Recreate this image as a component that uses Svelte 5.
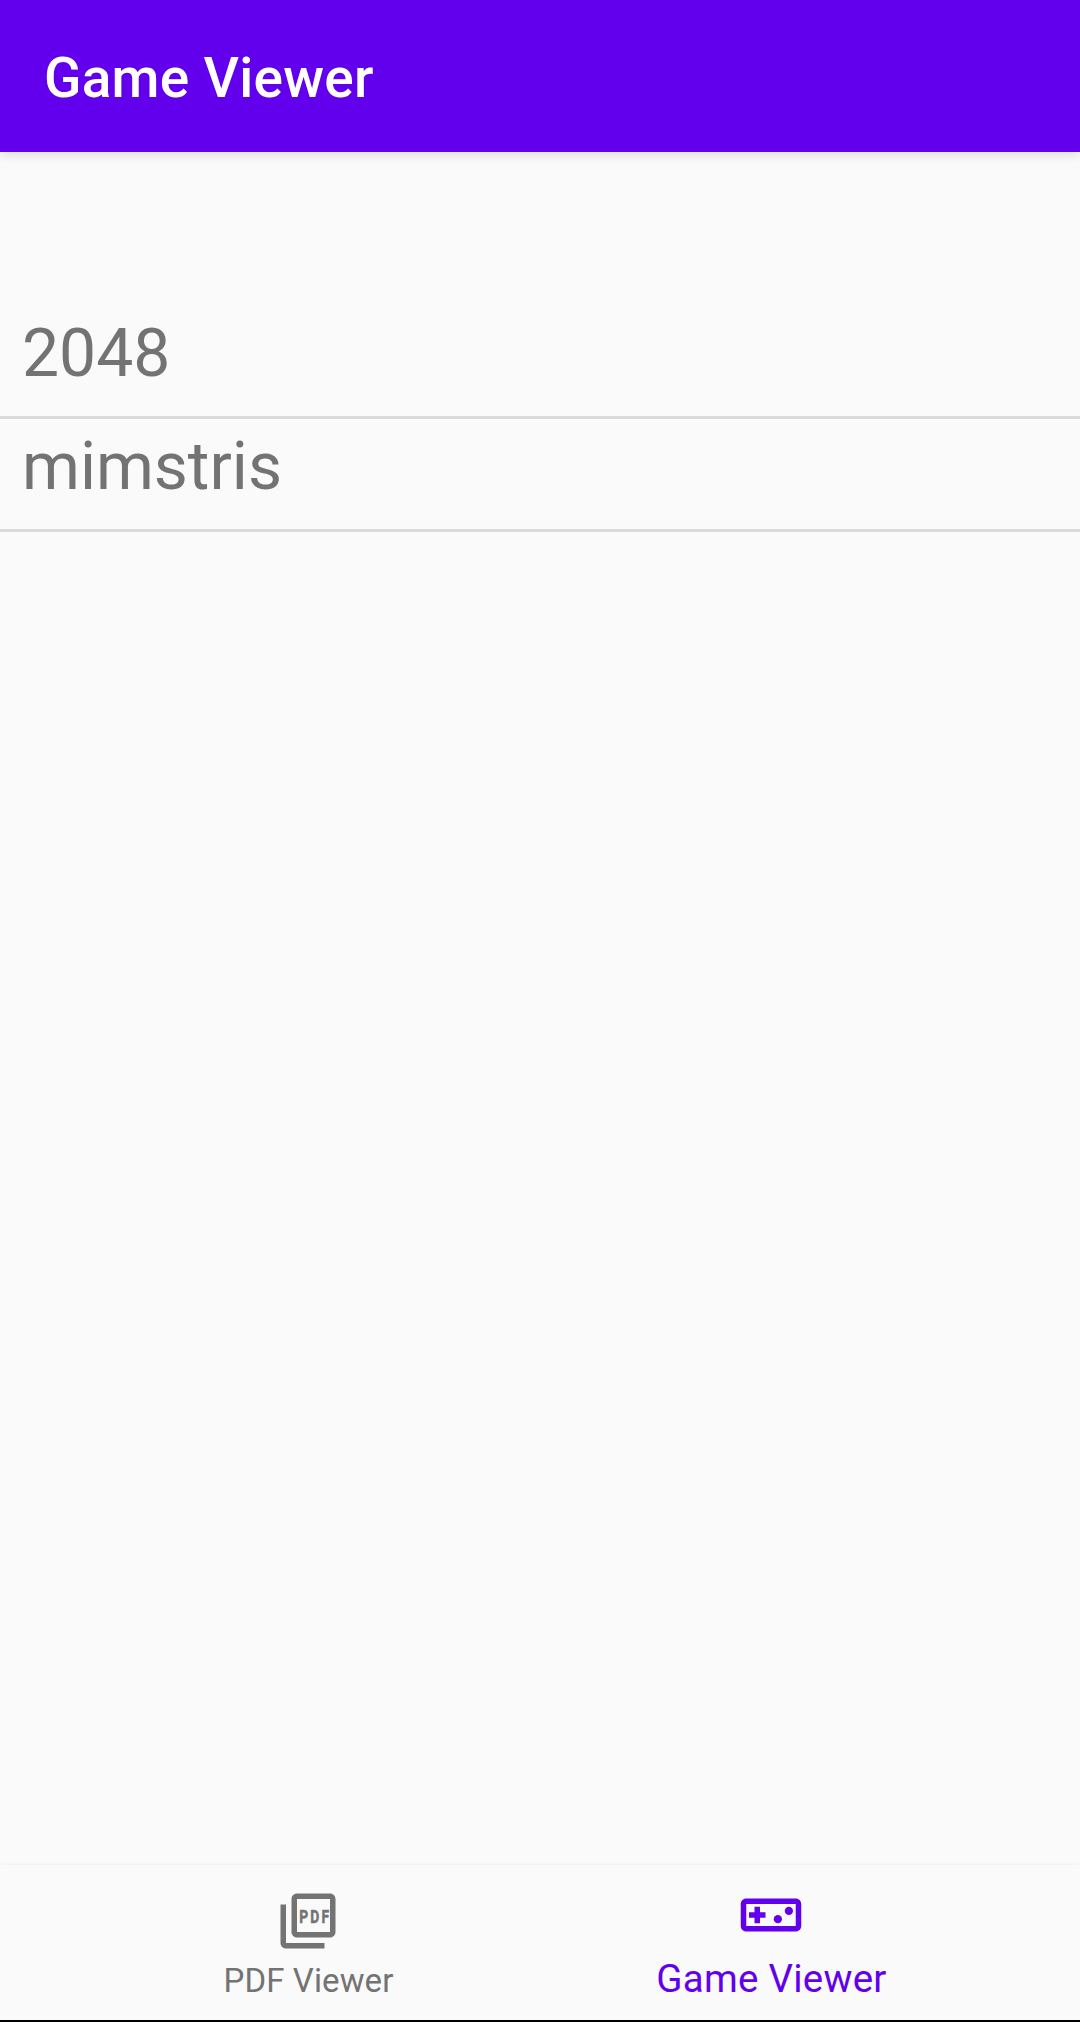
<script lang="ts">
    let title = 'Game Viewer';
    let games = ['2048', 'mimstris'];
    let active = 'game';
</script>

<div class="screen">
    <header class="app-bar">
        <h1>{title}</h1>
    </header>

    <main>
        <ul class="game-list">
            {#each games as game}
                <li>{game}</li>
            {/each}
        </ul>
    </main>

    <nav class="bottom-nav">
        <button class="tab" class:active={active === 'pdf'} on:click={() => (active = 'pdf')}>
            <svg viewBox="0 0 24 24" fill="currentColor">
                <path d="M20 2H8c-1.1 0-2 .9-2 2v12c0 1.1.9 2 2 2h12c1.1 0 2-.9 2-2V4c0-1.1-.9-2-2-2zm0 14H8V4h12v12zM4 6H2v14c0 1.1.9 2 2 2h14v-2H4V6z" />
                <text class="pdf" transform="translate(8.85 12.85) scale(.72 1)" x="0 5.5 11.2">PDF</text>
            </svg>
            <span>PDF Viewer</span>
        </button>
        <button class="tab" class:active={active === 'game'} on:click={() => (active = 'game')}>
            <svg viewBox="0 0 24 24" fill="currentColor">
                <path d="M21 6H3c-1.1 0-2 .9-2 2v8c0 1.1.9 2 2 2h18c1.1 0 2-.9 2-2V8c0-1.1-.9-2-2-2zm0 10H3V8h18v8zM6 15h2v-2h2v-2H8V9H6v2H4v2h2z" />
                <circle cx="14.5" cy="13.5" r="1.5" />
                <circle cx="18.5" cy="10.5" r="1.5" />
            </svg>
            <span>Game Viewer</span>
        </button>
    </nav>
</div>

<style>
    :global(body) {
        margin: 0;
        background-color: #fafafa;
    }

    .screen {
        display: flex;
        flex-direction: column;
        box-sizing: border-box;
        height: 2022px;
        border-bottom: 2px solid #000;
        background-color: #fafafa;
        font-family: Roboto, sans-serif;
    }

    .app-bar {
        display: flex;
        align-items: center;
        box-sizing: border-box;
        height: 152px;
        padding: 4px 44px 0;
        background-color: #6200ee;
        color: #fff;
        box-shadow: 0 3px 10px rgba(0, 0, 0, 0.12);
    }

    h1 {
        margin: 0;
        font-size: 55px;
        font-weight: 500;
        letter-spacing: 0.25px;
    }

    main {
        flex: 1;
        padding-top: 154px;
    }

    .game-list {
        margin: 0;
        padding: 0;
        list-style: none;
    }

    .game-list li {
        box-sizing: border-box;
        height: 113px;
        padding: 9px 22px 0;
        border-bottom: 3px solid #dadada;
        color: #737373;
        font-size: 66px;
        line-height: 77px;
    }

    .bottom-nav {
        display: flex;
        justify-content: center;
        box-sizing: border-box;
        height: 155px;
        padding-right: 2px;
        background-color: #fafafa;
        box-shadow: 0 0 4px rgba(0, 0, 0, 0.07);
    }

    .tab {
        display: flex;
        flex-direction: column;
        align-items: center;
        justify-content: space-between;
        box-sizing: border-box;
        width: 463px;
        padding: 23px 0 20px;
        border: none;
        background: none;
        color: #737373;
        font-family: inherit;
        font-size: 33px;
        line-height: 39px;
        letter-spacing: 0.1px;
    }

    .tab.active {
        padding: 17px 0 19px;
        color: #6200ee;
        font-size: 38.5px;
        line-height: 45px;
        letter-spacing: 0.25px;
    }

    .tab span {
        padding-left: 2px;
    }

    .tab svg {
        width: 66px;
        height: 66px;
    }

    .pdf {
        font-size: 7px;
        font-weight: 700;
        letter-spacing: 0;
        stroke: currentColor;
        stroke-width: 0.2px;
    }
</style>
